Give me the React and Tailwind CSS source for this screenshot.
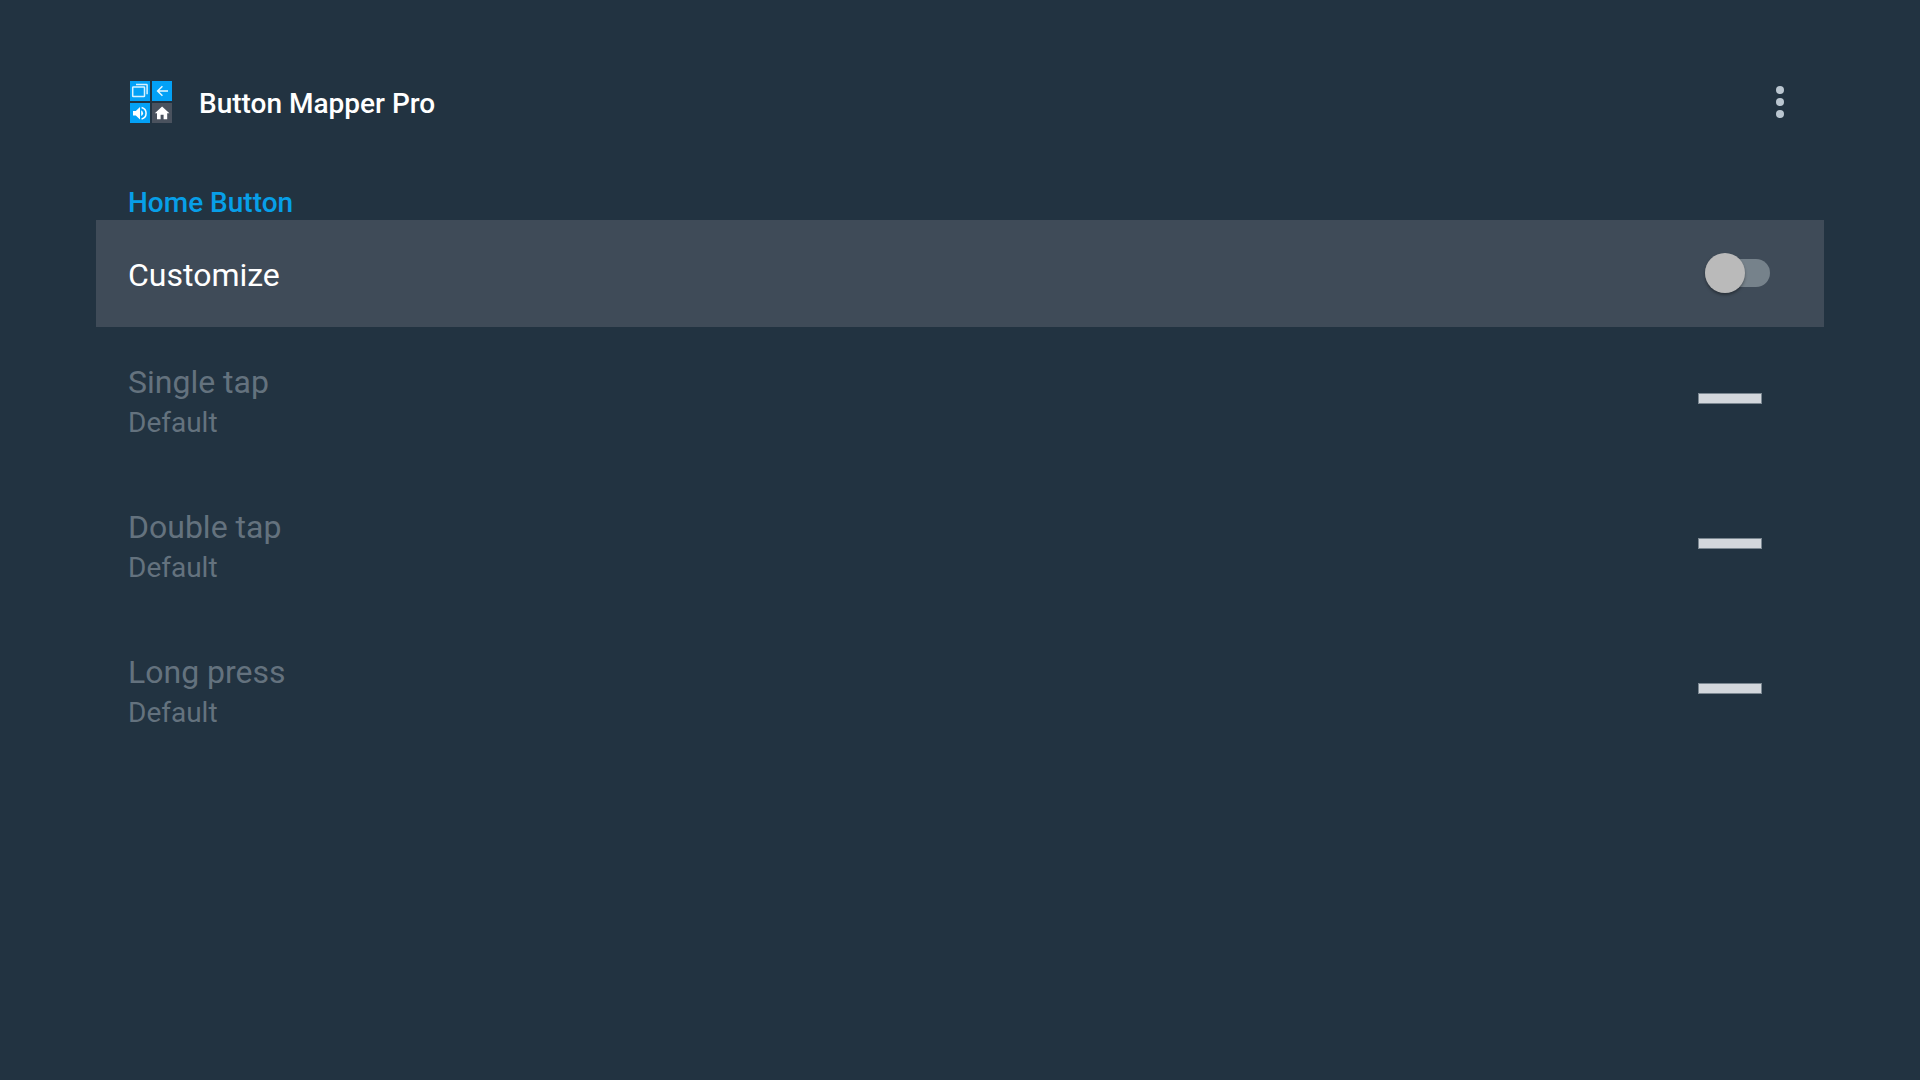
import { useState } from "react";

const actions = [
  { title: "Single tap", value: "Default" },
  { title: "Double tap", value: "Default" },
  { title: "Long press", value: "Default" },
];

function Logo() {
  return (
    <svg viewBox="0 0 42 42" className="h-[42px] w-[42px] shrink-0" aria-hidden="true">
      <rect x="0" y="0" width="20" height="20" fill="#03a1f6" />
      <rect x="22" y="0" width="20" height="20" fill="#03a1f6" />
      <rect x="0" y="22" width="20" height="20" fill="#03a1f6" />
      <rect x="22" y="22" width="20" height="20" fill="#4a525e" />

      {/* recent apps */}
      <g fill="none" stroke="#d9f3ff" strokeWidth="1.5">
        <rect x="2.7" y="6" width="11.8" height="9.6" rx="0.6" />
        <path d="M6 3.6h10.5a0.6 0.6 0 0 1 .6 .6v9" />
      </g>

      {/* back */}
      <path d="M38 10H28M32.4 5.2L27.6 10l4.8 4.8" fill="none" stroke="#e6f7ff" strokeWidth="1.5" />

      {/* volume */}
      <path d="M3 30v4.4h2.8l4.2 4V26l-4.2 4z" fill="#fff" />
      <path d="M11.2 29.3a3.2 3.2 0 0 1 0 5.8z" fill="#fff" />
      <path d="M11.6 26.4a6 6 0 0 1 0 11.6" fill="none" stroke="#fff" strokeWidth="1.5" />

      {/* home */}
      <path d="M30.6 38.2v-4.4h3v4.4h3.6v-6h2.2L32.1 25.6 24.8 32.2H27v6z" fill="#fff" />
    </svg>
  );
}

function App() {
  const [customize, setCustomize] = useState(false);

  return (
    <div className="min-h-screen bg-[#223341] px-24 pt-[72px] font-[Roboto,sans-serif] text-white">

      {/* Header */}
      <header className="flex h-[60px] items-center justify-between pr-6 pl-[34px]">
        <div className="flex items-center gap-[27px]">
          <Logo />
          <h1 className="pt-1 text-[28px] leading-10 font-medium">Button Mapper Pro</h1>
        </div>
        <button aria-label="More options" className="flex h-10 w-10 items-center justify-center">
          <svg viewBox="0 0 8 32" className="h-8 w-2" fill="#bac6d0">
            <circle cx="4" cy="4" r="4" />
            <circle cx="4" cy="16" r="4" />
            <circle cx="4" cy="28" r="4" />
          </svg>
        </button>
      </header>

      <main className="pt-[55px]">
        <h2 className="pb-px pl-8 text-[28px] leading-8 font-medium text-[#079fe8]">
          Home Button
        </h2>

        {/* Customize */}
        <div className="flex h-[107px] items-center justify-between bg-[#3f4b58] pr-[54px] pb-0.5 pl-8">
          <label htmlFor="customize" className="pt-1 text-[32px] leading-10">
            Customize
          </label>
          <input
            id="customize"
            type="checkbox"
            role="switch"
            checked={customize}
            onChange={(e) => setCustomize(e.target.checked)}
            className="flex h-7 w-[65px] appearance-none items-center rounded-full bg-[#76828b] before:h-10 before:w-10 before:rounded-full before:bg-[#bababa] before:shadow-[0_2px_3px_rgba(0,0,0,0.35)] checked:justify-end"
          />
        </div>

        {/* Actions */}
        {actions.map((action) => (
          <button
            key={action.title}
            disabled={!customize}
            className="flex h-[145px] w-full items-center justify-between pr-[62px] pb-0.5 pl-8 text-left disabled:text-[#64727e]"
          >
            <span className="flex flex-col pt-2">
              <span className="text-[32px] leading-10">{action.title}</span>
              <span className="text-[28px] leading-[42px]">{action.value}</span>
            </span>
            <span className="h-[11px] w-16 border border-[#7b8791] bg-[#d3d7dc]" />
          </button>
        ))}
      </main>
    </div>
  );
}

export default App;
